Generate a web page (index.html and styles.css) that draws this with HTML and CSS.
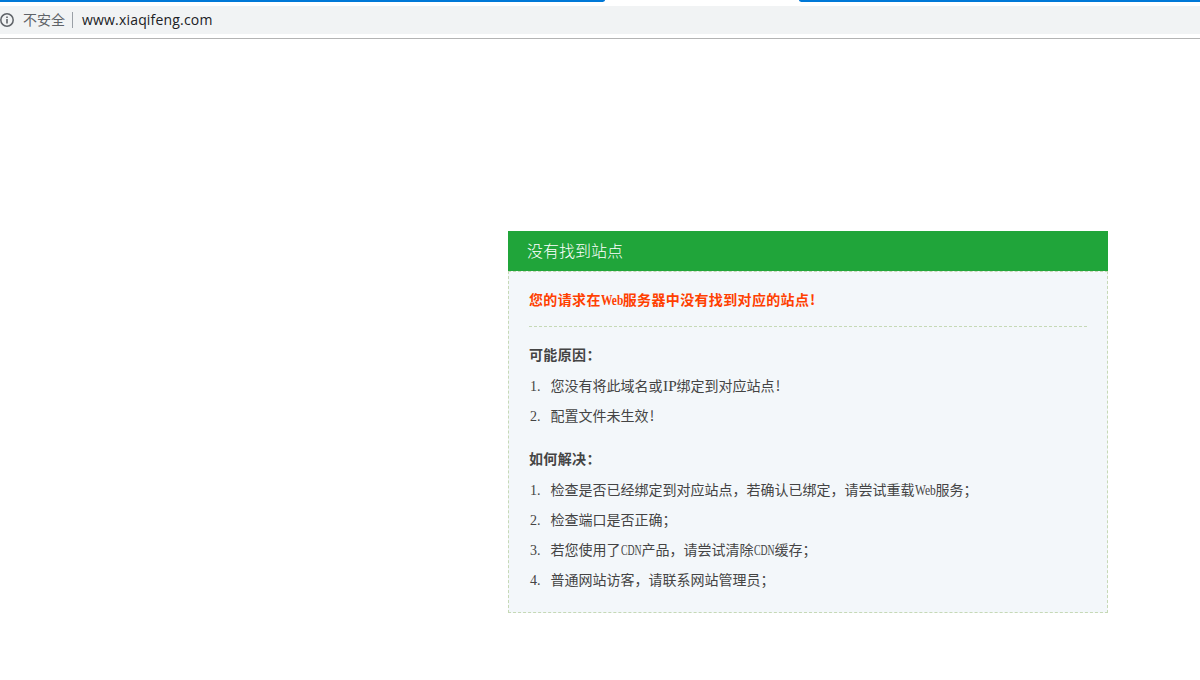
FILE: index.html
```
<!DOCTYPE html>
<html lang="zh-CN">
<head>
	<meta charset="UTF-8">
	<title>没有找到站点</title>
	<link rel="stylesheet" href="styles.css">
</head>
<body>
	<div class="tabs">
		<div class="tab-left"></div>
		<div class="tab-right"></div>
	</div>
	<div class="address">
		<svg class="info" width="14" height="14" viewBox="0 0 14 14">
			<circle cx="7" cy="7" r="6.2" fill="none" stroke="#5f6368" stroke-width="1.5"/>
			<path d="M7 6v4.4M7 3.4v1.5" stroke="#5f6368" stroke-width="1.6"/>
		</svg>
		<span class="unsafe">不安全</span>
		<span class="line"></span>
		<span class="url">www.xiaqifeng.com</span>
	</div>
	<div class="main">
		<div class="title">没有找到站点</div>
		<div class="content">
			<p class="t1">您的请求在<span class="en web">Web</span>服务器中没有找到对应的站点<span class="mark">!</span></p>
			<p class="t2">可能原因：</p>
			<ol>
				<li>您没有将此域名或<span class="en ip">IP</span>绑定到对应站点<span class="mark">!</span></li>
				<li>配置文件未生效<span class="mark">!</span></li>
			</ol>
			<p class="t2">如何解决：</p>
			<ol>
				<li>检查是否已经绑定到对应站点，若确认已绑定，请尝试重载<span class="en web">Web</span>服务；</li>
				<li>检查端口是否正确；</li>
				<li>若您使用了<span class="en cdn">CDN</span>产品，请尝试清除<span class="en cdn">CDN</span>缓存；</li>
				<li>普通网站访客，请联系网站管理员；</li>
			</ol>
		</div>
	</div>
</body>
</html>
```
FILE: styles.css
```
*{margin:0;padding:0;list-style: none;box-sizing: border-box;}
body{background-color: #fff;font-family: "Noto Sans CJK SC",sans-serif;font-size: 14px;color: #444;overflow: hidden;}
.tabs{height: 2px;display: flex;justify-content: space-between;}
.tab-left{width: 605px;background-color: #0078d7;border-bottom-right-radius: 4px 2px;}
.tab-right{width: 401px;background-color: #0078d7;border-bottom-left-radius: 4px 2px;}
.address{height: 37px;border-top: 4px solid #fff;border-bottom: 1px solid #b4b4b4;display: flex;align-items: flex-start;background: linear-gradient(#f1f3f4 28px,#fff 28px);line-height: 28px;}
.info{margin-top: 7px;flex: none;}
.unsafe{margin-left: 9px;color: #5f6368;line-height: 26px;}
.line{width: 1px;height: 16px;margin: 6px 9px 0 7px;background-color: #9aa0a6;}
.url{font-family: "Open Sans",sans-serif;color: #202124;font-size: 14px;letter-spacing: .18px;}
.main{width: 600px;margin: 192px 0 0 508px;}
.title{height: 40px;line-height: 38px;padding-left: 19px;font-size: 16px;font-weight: 300;color: #fff;background-color: #20a53a;}
.content{height: 342px;padding: 12px 20px 0;border: 1px dashed #c6d9b6;background-color: #f3f7fa;}
.t1,.t2{line-height: 30px;font-weight: bold;letter-spacing: .35px;}
.t1{height: 43px;color: #ff4000;border-bottom: 1px dashed #c6d9b6;}
.t2{margin-top: 12px;}
ol{counter-reset: num;padding-top: 1px;}
ol + .t2{margin-top: 13px;}
li{display: flex;height: 30px;line-height: 30px;white-space: nowrap;}
li:before{counter-increment: num;content: counter(num) ".";width: 21px;padding-left: 1px;margin-right: -.5px;font: 14px/34px "Liberation Serif",serif;}
.en{display: inline-block;font-family: "Liberation Serif",serif;font-weight: normal;letter-spacing: 0;transform-origin: 0 50%;}
li .en{line-height: 34px;}
.web{width: 21px;transform: scaleX(.82);}
.t1 .web{width: 22px;font-weight: bold;}
.ip{width: 14px;transform: scaleX(1.1);}
.cdn{width: 21px;transform: scaleX(.7);}
.mark{display: inline-block;width: 7px;text-align: center;}
```
